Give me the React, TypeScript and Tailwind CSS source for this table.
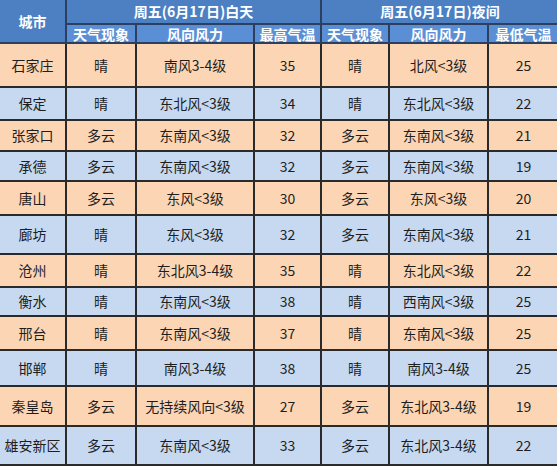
import React from "react";

type Row = { city: string; dw: string; dwind: string; hi: string; nw: string; nwind: string; lo: string };

const rows: Row[] = [
  { city: "石家庄", dw: "晴", dwind: "南风3-4级", hi: "35", nw: "晴", nwind: "北风<3级", lo: "25" },
  { city: "保定", dw: "晴", dwind: "东北风<3级", hi: "34", nw: "晴", nwind: "东北风<3级", lo: "22" },
  { city: "张家口", dw: "多云", dwind: "东南风<3级", hi: "32", nw: "多云", nwind: "东南风<3级", lo: "21" },
  { city: "承德", dw: "多云", dwind: "东南风<3级", hi: "32", nw: "多云", nwind: "东南风<3级", lo: "19" },
  { city: "唐山", dw: "多云", dwind: "东风<3级", hi: "30", nw: "多云", nwind: "东风<3级", lo: "20" },
  { city: "廊坊", dw: "晴", dwind: "东风<3级", hi: "32", nw: "多云", nwind: "东南风<3级", lo: "21" },
  { city: "沧州", dw: "晴", dwind: "东北风3-4级", hi: "35", nw: "晴", nwind: "东北风<3级", lo: "22" },
  { city: "衡水", dw: "晴", dwind: "东南风<3级", hi: "38", nw: "晴", nwind: "西南风<3级", lo: "25" },
  { city: "邢台", dw: "晴", dwind: "东南风<3级", hi: "37", nw: "晴", nwind: "东南风<3级", lo: "25" },
  { city: "邯郸", dw: "晴", dwind: "南风3-4级", hi: "38", nw: "晴", nwind: "南风3-4级", lo: "25" },
  { city: "秦皇岛", dw: "多云", dwind: "无持续风向<3级", hi: "27", nw: "多云", nwind: "东北风3-4级", lo: "19" },
  { city: "雄安新区", dw: "多云", dwind: "东南风<3级", hi: "33", nw: "多云", nwind: "东北风3-4级", lo: "22" },
];

const heights = [44, 33, 31, 30, 34, 39, 33, 29, 34, 36, 40, 39];

export default function App() {
  const hcell =
    "flex items-center justify-center text-white font-bold text-[14px] border-r-2 border-b-2 border-[#2c3f5e]";
  return (
    <div
      className="w-[557px] h-[467px] overflow-hidden bg-white"
      style={{ fontFamily: '"Noto Sans CJK SC", "Noto Sans", sans-serif' }}
    >
      <div className="w-[560px]">
        <div className="grid grid-cols-[67px_70px_118px_67px_68px_99px_71px] grid-rows-[25px_19px]">
          <div className={`${hcell} row-span-2 bg-[#4c80c2]`}>城市</div>
          <div className={`${hcell} col-span-3 bg-[#4c80c2]`}>周五(6月17日)白天</div>
          <div className={`${hcell} col-span-3 bg-[#4c80c2]`}>周五(6月17日)夜间</div>
          <div className={`${hcell} bg-[#5a8fd5] leading-none`}>天气现象</div>
          <div className={`${hcell} bg-[#5a8fd5] leading-none`}>风向风力</div>
          <div className={`${hcell} bg-[#5a8fd5] leading-none`}>最高气温</div>
          <div className={`${hcell} bg-[#5a8fd5] leading-none`}>天气现象</div>
          <div className={`${hcell} bg-[#5a8fd5] leading-none`}>风向风力</div>
          <div className={`${hcell} bg-[#5a8fd5] leading-none`}>最低气温</div>
        </div>
        {rows.map((r, i) => {
          const bg = i % 2 === 0 ? "bg-[#fcd5b4]" : "bg-[#c6d9f1]";
          const cell = `flex items-center justify-center text-[14px] text-[#1e1e1e] border-r-2 border-b-2 border-[#2a2a2a] ${bg}`;
          return (
            <div
              key={r.city}
              className="grid grid-cols-[67px_70px_118px_67px_68px_99px_71px]"
              style={{ height: heights[i] }}
            >
              <div className={cell}>{r.city}</div>
              <div className={cell}>{r.dw}</div>
              <div className={cell}>{r.dwind}</div>
              <div className={cell}>{r.hi}</div>
              <div className={cell}>{r.nw}</div>
              <div className={cell}>{r.nwind}</div>
              <div className={cell}>{r.lo}</div>
            </div>
          );
        })}
      </div>
    </div>
  );
}
